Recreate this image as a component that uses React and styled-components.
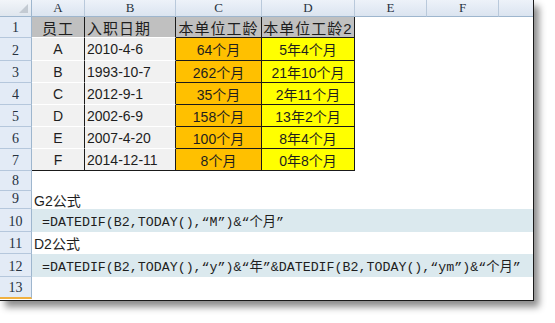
import React from "react";
import styled, { createGlobalStyle } from "styled-components";

const COLS = ["A", "B", "C", "D", "E", "F", "G"];
const ROW_HEIGHTS = [21, 23, 22, 22, 22, 22, 22, 20, 18, 23, 22, 23, 22];

const data = [
  ["A", "2010-4-6", "64个月", "5年4个月"],
  ["B", "1993-10-7", "262个月", "21年10个月"],
  ["C", "2012-9-1", "35个月", "2年11个月"],
  ["D", "2002-6-9", "158个月", "13年2个月"],
  ["E", "2007-4-20", "100个月", "8年4个月"],
  ["F", "2014-12-11", "8个月", "0年8个月"],
];

const GlobalStyle = createGlobalStyle`
  body {
    margin: 0;
    background: #ffffff;
  }
`;

const Page = styled.div`
  width: 555px;
  height: 323px;
  background: #ffffff;
  overflow: hidden;
`;

const Frame = styled.div`
  width: 533px;
  height: 300px;
  background: #ffffff;
  border-right: 1px solid #1a1a1a;
  border-bottom: 1px solid #1a1a1a;
  box-shadow: 5px 6px 7px rgba(0, 0, 0, 0.45);
  overflow: hidden;
`;

const Sheet = styled.div`
  display: grid;
  grid-template-columns: 32px 53px 91px 86px 93px 72px 72px 80px;
  grid-template-rows: 17px ${ROW_HEIGHTS.map((h) => h + "px").join(" ")};
  font-family: "Liberation Sans", "Noto Sans CJK SC", sans-serif;
  color: #1e1e1e;
`;

const Corner = styled.div`
  position: relative;
  background: linear-gradient(#f2f5f9, #dfe6ee);
  border-right: 1px solid #9eb6ce;
  border-bottom: 1px solid #9eb6ce;
  &::after {
    content: "";
    position: absolute;
    right: 3px;
    bottom: 3px;
    border-left: 9px solid transparent;
    border-bottom: 9px solid #c3cad2;
  }
`;

const ColHead = styled.div`
  display: flex;
  align-items: center;
  justify-content: center;
  overflow: hidden;
  background: linear-gradient(#edf2f9, #dbe4f0);
  border-right: 1px solid #b9c9db;
  border-bottom: 1px solid #9eb6ce;
  font-family: "Liberation Serif", serif;
  font-size: 13px;
  color: #27323f;
`;

const RowHead = styled.div`
  display: flex;
  align-items: flex-end;
  justify-content: center;
  padding-bottom: 1px;
  background: #e3ebf6;
  border-right: 1px solid #9eb6ce;
  border-bottom: ${(p) => (p.$active ? "2px solid #f0b040" : "1px solid #b5c7dc")};
  font-family: "Liberation Serif", serif;
  font-size: 14px;
  color: #27323f;
`;

const Cell = styled.div`
  display: flex;
  align-items: center;
  justify-content: ${(p) => (p.$left ? "flex-start" : "center")};
  padding-left: ${(p) => (p.$left ? "2px" : "0")};
  background: ${(p) => p.$bg || "#ffffff"};
  border-right: 1px solid ${(p) => p.$right || "transparent"};
  border-bottom: 1px solid ${(p) => p.$bottom || "transparent"};
  font-size: ${(p) => (p.$head ? "15px" : "14px")};
  letter-spacing: ${(p) => (p.$head ? "1px" : "0")};
  white-space: nowrap;
`;

const Label = styled.div`
  grid-column: 2 / -1;
  display: flex;
  align-items: center;
  padding-left: 2px;
  font-size: 14px;
`;

const Formula = styled.div`
  grid-column: 2 / -1;
  display: flex;
  align-items: center;
  padding-left: 10px;
  background: #dbe9ee;
  font-family: "Liberation Mono", "Noto Sans CJK SC", monospace;
  font-size: 13.3px;
  white-space: nowrap;
  color: #1e1e1e;
`;

const Blank = styled.div`
  grid-column: 2 / -1;
`;

function TableRow({ index, cells }) {
  const last = index === data.length - 1;
  const abBottom = last ? "#1a1a1a" : "#ffffff";
  return (
    <>
      <RowHead>{index + 2}</RowHead>
      <Cell $bg="#f1f1f1" $right="#1a1a1a" $bottom={abBottom}>{cells[0]}</Cell>
      <Cell $bg="#f1f1f1" $right="#1a1a1a" $bottom={abBottom} $left>{cells[1]}</Cell>
      <Cell $bg="#ffc000" $right="#1a1a1a" $bottom="#1a1a1a">{cells[2]}</Cell>
      <Cell $bg="#ffff00" $right="#1a1a1a" $bottom="#1a1a1a">{cells[3]}</Cell>
      <Cell />
      <Cell />
      <Cell />
    </>
  );
}

export default function App() {
  return (
    <Page>
      <GlobalStyle />
      <Frame>
        <Sheet>
          <Corner />
          {COLS.map((c) => (
            <ColHead key={c}>{c}</ColHead>
          ))}

          <RowHead>1</RowHead>
          <Cell $bg="#c0c0c0" $right="#1a1a1a" $bottom="#ffffff" $head>员工</Cell>
          <Cell $bg="#c0c0c0" $right="#1a1a1a" $bottom="#ffffff" $head $left>入职日期</Cell>
          <Cell $bg="#c0c0c0" $right="#1a1a1a" $bottom="#1a1a1a" $head>本单位工龄</Cell>
          <Cell $bg="#c0c0c0" $right="#1a1a1a" $bottom="#1a1a1a" $head>本单位工龄2</Cell>
          <Cell />
          <Cell />
          <Cell />

          {data.map((cells, i) => (
            <TableRow key={i} index={i} cells={cells} />
          ))}

          <RowHead>8</RowHead>
          <Blank />
          <RowHead>9</RowHead>
          <Label>G2公式</Label>
          <RowHead>10</RowHead>
          <Formula>=DATEDIF(B2,TODAY(),“M”)&amp;“个月”</Formula>
          <RowHead>11</RowHead>
          <Label>D2公式</Label>
          <RowHead>12</RowHead>
          <Formula>=DATEDIF(B2,TODAY(),“y”)&amp;“年”&amp;DATEDIF(B2,TODAY(),“ym”)&amp;“个月”</Formula>
          <RowHead $active>13</RowHead>
          <Blank />
        </Sheet>
      </Frame>
    </Page>
  );
}
